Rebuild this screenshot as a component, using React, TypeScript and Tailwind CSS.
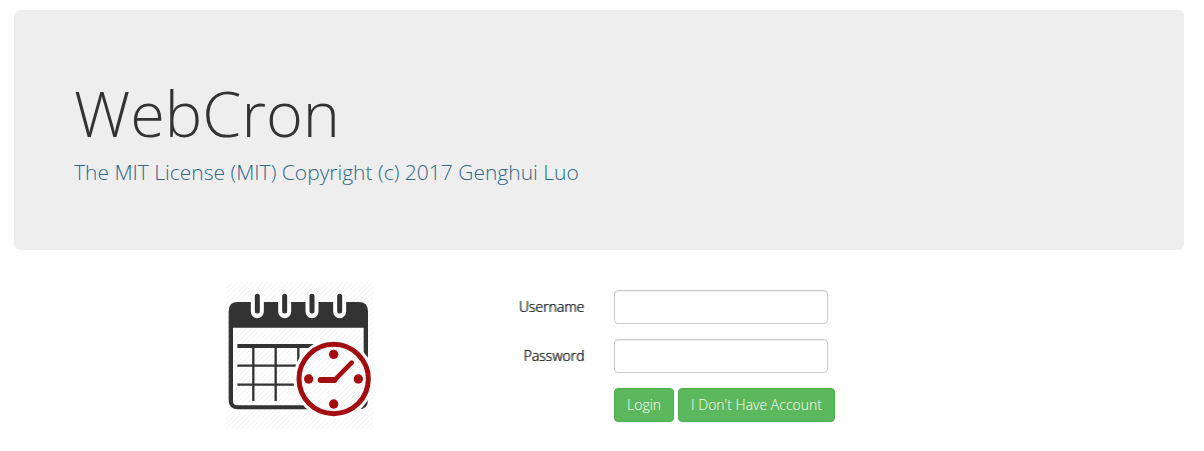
import type { ReactNode } from "react";

function CalendarLogo() {
  return (
    <svg viewBox="33 21 441 441" className="size-[147px]" role="img" aria-label="Calendar with clock">
      <defs>
        <pattern id="stripes" width="15" height="15" patternUnits="userSpaceOnUse">
          <path d="M-3 3L3-3M0 15L15 0M12 18L18 12" stroke="#ededed" strokeWidth="2" />
        </pattern>
      </defs>
      <rect x="33" y="21" width="441" height="441" fill="url(#stripes)" />
      <path
        fill="#333"
        fillRule="evenodd"
        d="M69 81H431Q459 81 459 109V375Q459 403 431 403H69Q41 403 41 375V109Q41 81 69 81ZM54 158V378Q54 391 67 391H433Q446 391 446 378V158Z"
      />
      <g strokeLinecap="round">
        <path d="M127 80V110M209 80V110M291 80V110M374 80V110" stroke="#fff" strokeWidth="39" />
        <path d="M127 64V108M209 64V108M291 64V108M374 64V108" stroke="#333" strokeWidth="15" />
      </g>
      <path d="M67 213H300" stroke="#333" strokeWidth="12" />
      <path d="M67 272H250M67 329H250M115 213V378M182 213V378M250 213V260" stroke="#333" strokeWidth="7" />
      <circle cx="356" cy="312" r="121" fill="#fff" />
      <circle cx="356" cy="312" r="104" fill="url(#stripes)" stroke="#a30d0f" strokeWidth="15" />
      <g fill="#a30d0f">
        <circle cx="356" cy="238" r="14" />
        <circle cx="356" cy="387" r="14" />
        <circle cx="281" cy="312" r="14" />
        <circle cx="430" cy="312" r="14" />
      </g>
      <path d="M317 315H358" fill="none" stroke="#a30d0f" strokeWidth="18" strokeLinecap="round" />
      <path d="M358 316L410 263" fill="none" stroke="#a30d0f" strokeWidth="14" strokeLinecap="round" />
    </svg>
  );
}

function Field({ id, label, type }: { id: string; label: string; type: string }) {
  return (
    <div className="flex items-center">
      <label htmlFor={id} className="w-1/7 pr-[15px] text-right text-sm/5 text-[#222] [text-shadow:1px_0_0_#222222cc]">
        {label}
      </label>
      <div className="px-[15px]">
        <input
          id={id}
          name={id}
          type={type}
          className="block h-[34px] w-[214px] rounded border border-[#ccc] bg-white px-3 text-sm shadow-[inset_0_1px_1px_rgba(0,0,0,0.075)] outline-none focus:border-[#66afe9]"
        />
      </div>
    </div>
  );
}

function Button({ type, children }: { type: "submit" | "button"; children: ReactNode }) {
  return (
    <button
      type={type}
      className="h-[34px] cursor-pointer rounded border border-[#4cae4c] bg-[#5cb85c] px-3 text-sm/5 font-light text-white hover:bg-[#449d44]"
    >
      {children}
    </button>
  );
}

export default function App() {
  return (
    <div className="pt-[10px] pr-5 pl-[14px] font-['Open_Sans',sans-serif] font-light text-[#333]">
      <header className="rounded-md bg-[#eee] px-[60px] pt-[68px] pb-[63px]">
        <h1 className="text-[63px]/[69px]">WebCron</h1>
        <p className="mt-[10px] text-[21px]/[30px]">
          <a href="#license" className="text-[#2f6886]">
            The MIT License (MIT) Copyright (c) 2017 Genghui Luo
          </a>
        </p>
      </header>
      <main className="mt-8 flex items-start">
        <div className="flex w-5/12 justify-end pr-[129px]">
          <CalendarLogo />
        </div>
        <form className="flex w-7/12 flex-col gap-[15px] pt-2" onSubmit={(event) => event.preventDefault()}>
          <Field id="username" label="Username" type="text" />
          <Field id="password" label="Password" type="password" />
          <div className="ml-[calc(100%/7)] flex gap-1 px-[15px]">
            <Button type="submit">Login</Button>
            <Button type="button">I Don't Have Account</Button>
          </div>
        </form>
      </main>
    </div>
  );
}
